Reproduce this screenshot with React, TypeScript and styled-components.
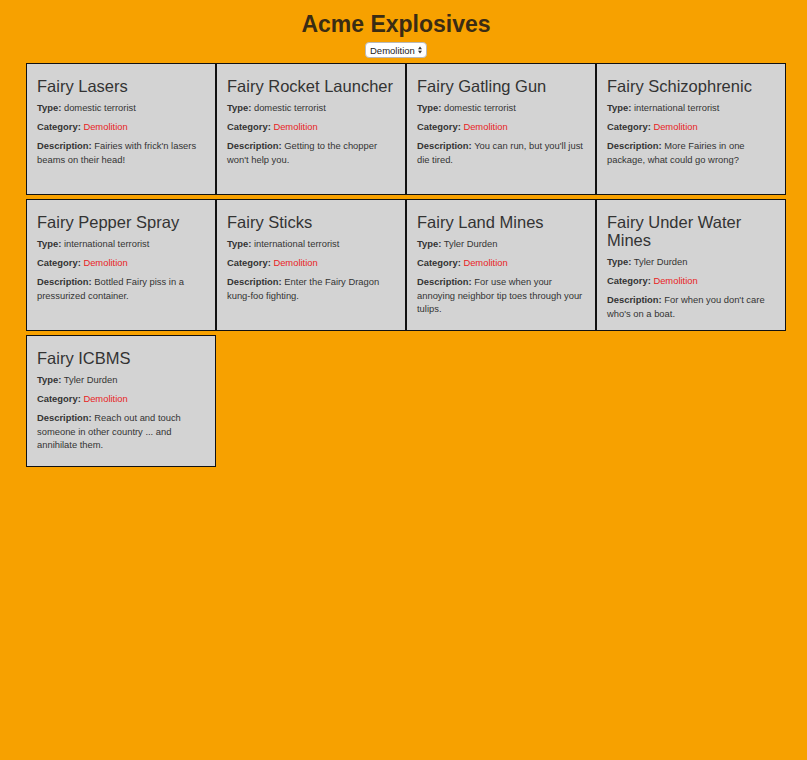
import React from "react";
import styled, { createGlobalStyle } from "styled-components";

const GlobalStyle = createGlobalStyle`
  html, body {
    margin: 0;
    padding: 0;
    background: #f7a100;
  }
  body {
    font-family: "Liberation Sans", Arial, sans-serif;
    color: #333;
    min-height: 760px;
  }
`;

type Product = {
  name: string;
  type: string;
  description: string;
};

const products: Product[] = [
  { name: "Fairy Lasers", type: "domestic terrorist", description: "Fairies with frick'n lasers beams on their head!" },
  { name: "Fairy Rocket Launcher", type: "domestic terrorist", description: "Getting to the chopper won't help you." },
  { name: "Fairy Gatling Gun", type: "domestic terrorist", description: "You can run, but you'll just die tired." },
  { name: "Fairy Schizophrenic", type: "international terrorist", description: "More Fairies in one package, what could go wrong?" },
  { name: "Fairy Pepper Spray", type: "international terrorist", description: "Bottled Fairy piss in a pressurized container." },
  { name: "Fairy Sticks", type: "international terrorist", description: "Enter the Fairy Dragon kung-foo fighting." },
  { name: "Fairy Land Mines", type: "Tyler Durden", description: "For use when your annoying neighbor tip toes through your tulips." },
  { name: "Fairy Under Water Mines", type: "Tyler Durden", description: "For when you don't care who's on a boat." },
  { name: "Fairy ICBMS", type: "Tyler Durden", description: "Reach out and touch someone in other country ... and annihilate them." },
];

const Header = styled.header`
  display: flex;
  flex-direction: column;
  align-items: center;
  padding-right: 15px;
`;

const Title = styled.h1`
  margin: 11px 0 5px;
  font-size: 23px;
  line-height: 26px;
  font-weight: bold;
  color: #3a2c14;
`;

const SelectWrap = styled.div`
  position: relative;
  display: inline-flex;
  align-items: center;
  height: 16px;
  width: 62px;
  box-sizing: border-box;
  background: #fff;
  border: 1px solid #b9b9b9;
  border-radius: 4px;
  margin-bottom: 5px;
`;

const Select = styled.select`
  appearance: none;
  -webkit-appearance: none;
  border: none;
  background: transparent;
  font-family: "Liberation Sans", Arial, sans-serif;
  font-size: 9.5px;
  color: #222;
  padding: 0 0 0 4px;
  margin: 0;
  width: 100%;
  height: 100%;
  outline: none;
`;

const Arrows = styled.svg`
  position: absolute;
  right: 4px;
  top: 3px;
  pointer-events: none;
`;

const Grid = styled.main`
  display: grid;
  grid-template-columns: repeat(4, 190px);
  row-gap: 4px;
  justify-content: center;
  padding-left: 5px;
`;

const Card = styled.section`
  box-sizing: border-box;
  height: 132px;
  background: #d3d3d3;
  border: 1px solid #111;
  padding: 0 10px;
`;

const CardTitle = styled.h3`
  margin: 13px 0 6px;
  font-size: 16.5px;
  line-height: 18px;
  font-weight: normal;
  color: #333;
`;

const Line = styled.p`
  margin: 0 0 6px;
  font-size: 9.4px;
  line-height: 13.2px;
  color: #333;
`;

const Label = styled.strong`
  font-weight: bold;
`;

const CategoryValue = styled.span`
  color: #e8241f;
`;

export default function App() {
  return (
    <>
      <GlobalStyle />
      <Header>
        <Title>Acme Explosives</Title>
        <SelectWrap>
          <Select defaultValue="Demolition">
            <option>Demolition</option>
          </Select>
          <Arrows width="4" height="8" viewBox="0 0 4 8">
            <path d="M0 3.2 L2 0.5 L4 3.2 Z" fill="#333" />
            <path d="M0 4.8 L2 7.5 L4 4.8 Z" fill="#333" />
          </Arrows>
        </SelectWrap>
      </Header>
      <Grid>
        {products.map((p) => (
          <Card key={p.name}>
            <CardTitle>{p.name}</CardTitle>
            <Line>
              <Label>Type:</Label> {p.type}
            </Line>
            <Line>
              <Label>Category:</Label> <CategoryValue>Demolition</CategoryValue>
            </Line>
            <Line>
              <Label>Description:</Label> {p.description}
            </Line>
          </Card>
        ))}
      </Grid>
    </>
  );
}
